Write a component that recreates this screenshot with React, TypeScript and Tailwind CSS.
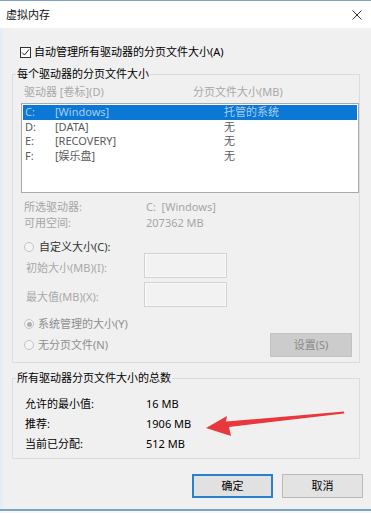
import React from "react";

const drives = [
  { letter: "C:", label: "[Windows]", size: "托管的系统", selected: true },
  { letter: "D:", label: "[DATA]", size: "无" },
  { letter: "E:", label: "[RECOVERY]", size: "无" },
  { letter: "F:", label: "[娱乐盘]", size: "无" },
];

const totals = [
  { label: "允许的最小值:", value: "16 MB" },
  { label: "推荐:", value: "1906 MB" },
  { label: "当前已分配:", value: "512 MB" },
];

function Radio({ checked = false }: { checked?: boolean }) {
  return (
    <span className="flex h-[10px] w-[10px] shrink-0 items-center justify-center rounded-full border border-[#c4c4c4] bg-[#f4f4f4]">
      {checked && <span className="h-[5px] w-[5px] rounded-full bg-[#b0b0b0]" />}
    </span>
  );
}

function SizeInput({ label }: { label: string }) {
  return (
    <div className="flex items-start">
      <span className="mt-[7px] w-[118px] text-[#a9a9a9] leading-[16px]">{label}</span>
      <div className="h-[25px] w-[83px] border border-[#d2d2d2] bg-[#f2f2f2] shadow-[inset_0_0_0_1px_#fafafa]" />
    </div>
  );
}

export default function App() {
  return (
    <div className="relative h-[513px] w-[371px] overflow-hidden bg-[#f7f7f7] font-['Noto_Sans','Noto_Sans_CJK_SC',sans-serif] text-[11px] text-black">
      <div className="flex h-[511px] flex-col border-t border-b-2 border-[#7da3c4]">
        {/* title bar */}
        <div className="flex h-[27px] shrink-0 items-center justify-between bg-white pl-[6px] pr-[9px]">
          <span className="leading-[16px] text-[#111]">虚拟内存</span>
          <svg width="10" height="10" viewBox="0 0 10 10" className="text-[#333]">
            <path d="M0.5 0.5 L9.5 9.5 M9.5 0.5 L0.5 9.5" stroke="currentColor" strokeWidth="1" fill="none" />
          </svg>
        </div>

        {/* body */}
        <div className="flex flex-1 flex-col border-l-[3px] border-[#e4eef5] bg-[#f0f0f0] pl-[9px] pr-[11px]">
          <div className="mt-[16px] flex h-[16px] items-center pl-[8px]">
            <span className="flex h-[11px] w-[11px] items-center justify-center border border-[#333] bg-white">
              <svg width="9" height="9" viewBox="0 0 9 9">
                <path d="M1 4.5 L3.5 7 L8 1.5" stroke="#222" strokeWidth="1" fill="none" />
              </svg>
            </span>
            <span className="ml-[3px] leading-[16px]">自动管理所有驱动器的分页文件大小(A)</span>
          </div>

          {/* group 1 */}
          <fieldset className="mt-[6px] border border-[#dcdcdc] pb-[5px] pl-[3px] pr-0">
            <legend className="px-[1px] leading-[16px]">每个驱动器的分页文件大小</legend>
            <div className="pl-[5px]">
              <div className="mt-[2px] flex h-[16px] items-center pl-[3px] text-[#a8a8a8]">
                <span className="w-[169px]">驱动器 [卷标](D)</span>
                <span>分页文件大小(MB)</span>
              </div>
              <div className="mt-[3px] h-[90px] border border-[#a9a9a9] bg-white p-[1px]">
                {drives.map((d) => (
                  <div
                    key={d.letter}
                    className={
                      d.selected
                        ? "flex h-[14.5px] items-center bg-[#0a78d4] px-[2px] text-[#a9cdee]"
                        : "flex h-[14.5px] items-center px-[2px] text-[#5a5a5a]"
                    }
                  >
                    <span className="w-[30px]">{d.letter}</span>
                    <span className="w-[169px]">{d.label}</span>
                    <span>{d.size}</span>
                  </div>
                ))}
              </div>

              <div className="mt-[6px] text-[#a6a6a6]">
                <div className="flex h-[16px] items-center pl-[3px]">
                  <span className="w-[122px]">所选驱动器:</span>
                  <span>C:&nbsp; [Windows]</span>
                </div>
                <div className="flex h-[16px] items-center pl-[3px]">
                  <span className="w-[122px]">可用空间:</span>
                  <span>207362 MB</span>
                </div>
              </div>

              <div className="mt-[10px] flex h-[12px] items-center pl-[3px]">
                <Radio />
                <span className="ml-[5px] text-[#333]">自定义大小(C):</span>
              </div>
              <div className="flex flex-col gap-[4px] pl-[5px]">
                <SizeInput label="初始大小(MB)(I):" />
                <SizeInput label="最大值(MB)(X):" />
              </div>

              <div className="mt-[9px] flex h-[16px] items-center pl-[3px] text-[#8e8e8e]">
                <Radio checked />
                <span className="ml-[4px]">系统管理的大小(Y)</span>
              </div>
              <div className="mt-[1px] flex h-[24px] items-center justify-between pl-[3px] pr-[7px]">
                <div className="flex items-center text-[#8e8e8e]">
                  <Radio />
                  <span className="ml-[4px]">无分页文件(N)</span>
                </div>
                <div className="flex h-[24px] w-[82px] items-center justify-center border border-[#c2c2c2] bg-[#cccccc] text-[#8a8a8a]">
                  设置(S)
                </div>
              </div>
            </div>
          </fieldset>

          {/* group 2 */}
          <fieldset className="mt-[7px] border border-[#dcdcdc] pb-[4px] pl-[3px] pr-0">
            <legend className="px-[1px] leading-[16px]">所有驱动器分页文件大小的总数</legend>
            <div className="mt-[8px] pl-[9px]">
              {totals.map((t) => (
                <div key={t.label} className="flex h-[20px] items-center">
                  <span className="w-[121px]">{t.label}</span>
                  <span>{t.value}</span>
                </div>
              ))}
            </div>
          </fieldset>

          <div className="mt-[15px] flex justify-end gap-[9px] pr-[-3px]">
            <div className="flex h-[24px] w-[81px] items-center justify-center border-2 border-[#2a7fcf] bg-[#e1e1e1]">
              确定
            </div>
            <div className="-mr-[3px] flex h-[24px] w-[81px] items-center justify-center border border-[#b9b9b9] bg-[#e3e3e3]">
              取消
            </div>
          </div>
        </div>
      </div>

      {/* red annotation arrow */}
      <svg
        className="pointer-events-none absolute left-0 top-0"
        width="371"
        height="513"
        viewBox="0 0 371 513"
      >
        <polygon
          points="206,428 227,416 226,421.5 344,411.5 344,413.5 229,427 231,436"
          fill="#e8383d"
        />
      </svg>
    </div>
  );
}
